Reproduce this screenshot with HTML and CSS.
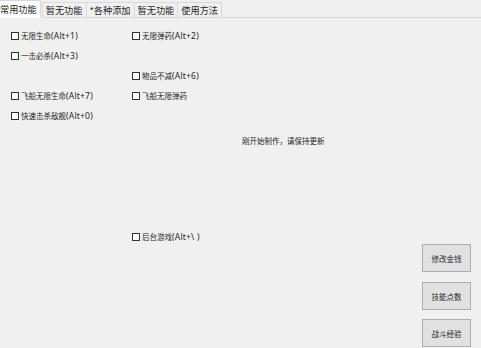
FILE: index.html
```html
<!DOCTYPE html>
<html>
<head>
<meta charset="utf-8">
<link rel="stylesheet" href="styles.css">
</head>
<body>
<div class="window">
  <div class="tabs">
    <div class="tab selected">常用功能</div>
    <div class="tab">暂无功能</div>
    <div class="tab">*各种添加</div>
    <div class="tab">暂无功能</div>
    <div class="tab">使用方法</div>
    <div class="tab-fill"></div>
  </div>
  <div class="page">
    <div class="main">
      <div class="row">
        <label class="cb c1"><span class="box"></span>无限生命<span class="lat">(Alt+1)</span></label>
        <label class="cb c2"><span class="box"></span>无限弹药<span class="lat">(Alt+2)</span></label>
      </div>
      <div class="row">
        <label class="cb c1"><span class="box"></span>一击必杀<span class="lat">(Alt+3)</span></label>
      </div>
      <div class="row r3">
        <label class="cb c2"><span class="box"></span>物品不减<span class="lat">(Alt+6)</span></label>
      </div>
      <div class="row">
        <label class="cb c1"><span class="box"></span>飞船无限生命<span class="lat">(Alt+7)</span></label>
        <label class="cb c2"><span class="box"></span>飞船无限弹药</label>
      </div>
      <div class="row">
        <label class="cb c1"><span class="box"></span>快速击杀敌舰<span class="lat">(Alt+0)</span></label>
      </div>
      <div class="note">刚开始制作，请保持更新</div>
      <div class="row bottom">
        <label class="cb c2"><span class="box"></span>后台游戏<span class="lat">(Alt+\ )</span></label>
      </div>
    </div>
    <div class="side">
      <button class="btn b1">修改金钱</button>
      <button class="btn b2">技能点数</button>
      <button class="btn b3">战斗经验</button>
    </div>
  </div>
</div>
</body>
</html>
```
FILE: styles.css
```css
* { box-sizing: border-box; }
html, body { margin: 0; padding: 0; }
body {
  background: #f0f0f0;
  font-family: "Noto Sans CJK SC", "Noto Sans", sans-serif;
  font-size: 7.5px;
  color: #262626;
  width: 481px;
  height: 348px;
  overflow: hidden;
}
.window { width: 481px; height: 348px; display: flex; flex-direction: column; }
.tabs {
  display: flex;
  height: 18px;
  align-items: flex-end;
  font-size: 9.2px;
}
.tab {
  height: 16px;
  line-height: 14px;
  padding: 0 3px 0 3px;
  border: 1px solid #d9d9d9;
  margin-left: -1px;
  background: #f0f0f0;
  white-space: nowrap;
}
.tab.selected {
  height: 18px;
  line-height: 16px;
  padding: 0 3px 0 0;
  margin-left: 0;
  background: #ffffff;
  border-left: none;
  border-bottom: 1px solid #ffffff;
  position: relative;
  z-index: 1;
  margin-right: 2px;
}
.tab-fill { flex: 1; border-bottom: 1px solid #d9d9d9; height: 1px; }
.page { flex: 1; display: flex; }
.main { flex: 1; padding-top: 8px; }
.row { height: 20px; display: flex; align-items: center; }
.row.r3 { height: 19px; }
.row.r3 + .row { height: 21px; }
.cb { display: flex; align-items: center; white-space: nowrap; line-height: 10px; }
.lat { font-family: "Noto Sans", sans-serif; font-size: 8.5px; letter-spacing: 0.2px; }
.c1 { width: 121px; margin-left: 11px; }
.c2 { margin-left: 132px; }
.c1 + .c2 { margin-left: 0; }
.box {
  width: 8px; height: 8px;
  border: 1px solid #333;
  background: #fff;
  margin-right: 2px;
  flex: none;
}
.note { margin: 8px 0 0 242px; height: 14px; line-height: 14px; }
.row.bottom { margin-top: 79px; }
.side { width: 59px; display: flex; flex-direction: column; padding-top: 226px; }
.btn {
  width: 49px;
  height: 28px;
  background: #e1e1e1;
  border: 1px solid #adadad;
  font-family: inherit;
  font-size: 7.5px;
  padding: 0;
  color: #262626;
  flex: none;
}
.b2 { margin-top: 10px; }
.b3 { margin-top: 9px; }
```
